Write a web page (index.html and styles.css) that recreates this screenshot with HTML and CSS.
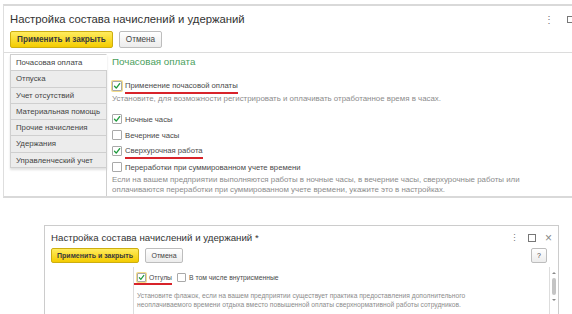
FILE: index.html
```html
<!DOCTYPE html>
<html lang="ru">
  <head>
    <meta charset="UTF-8" />
    <meta name="viewport" content="width=device-width, initial-scale=1.0" />
    <title>Настройка состава начислений и удержаний</title>
    <link rel="stylesheet" href="styles.css">
  </head>
  <body>
    <!-- Первый снимок: форма с вкладками -->
    <div class="form form-big">
      <div class="form-head">
        <h1 class="form-title">Настройка состава начислений и удержаний</h1>
        <div class="win-icons">
          <span class="icon-more">⋮</span>
          <span class="icon-max"></span>
        </div>
      </div>
      <div class="toolbar">
        <button class="btn btn-yellow">Применить и закрыть</button>
        <button class="btn">Отмена</button>
        <span class="toolbar-space"></span>
        <button class="btn btn-help"></button>
      </div>
      <div class="form-body">
        <div class="tabs">
          <div class="tab-list">
            <div class="tab tab-active">Почасовая оплата</div>
            <div class="tab">Отпуска</div>
            <div class="tab">Учет отсутствий</div>
            <div class="tab">Материальная помощь</div>
            <div class="tab">Прочие начисления</div>
            <div class="tab">Удержания</div>
            <div class="tab">Управленческий учет</div>
          </div>
          <div class="tabs-rest"></div>
        </div>
        <div class="panel">
          <div class="panel-title">Почасовая оплата</div>
          <div class="check check-first">
            <span class="box box-focus checked">
              <svg viewBox="0 0 12 12"><path d="M2.3 6.4 L4.9 9.2 L10 2.4" /></svg>
            </span>
            <span class="mark">Применение почасовой оплаты</span>
          </div>
          <p class="hint hint-first">Установите, для возможности регистрировать и оплачивать отработанное время в часах.</p>
          <div class="check-group">
            <div class="check">
              <span class="box checked">
                <svg viewBox="0 0 12 12"><path d="M2.3 6.4 L4.9 9.2 L10 2.4" /></svg>
              </span>
              <span>Ночные часы</span>
            </div>
            <div class="check">
              <span class="box"></span>
              <span>Вечерние часы</span>
            </div>
            <div class="check">
              <span class="box checked">
                <svg viewBox="0 0 12 12"><path d="M2.3 6.4 L4.9 9.2 L10 2.4" /></svg>
              </span>
              <span class="mark">Сверхурочная работа</span>
            </div>
            <div class="check">
              <span class="box"></span>
              <span>Переработки при суммированном учете времени</span>
            </div>
          </div>
          <p class="hint hint-last">Если на вашем предприятии выполняются работы в ночные часы, в вечерние часы, сверхурочные работы или<br>оплачиваются переработки при суммированном учете времени, укажите это в настройках.</p>
        </div>
      </div>
    </div>

    <!-- Второй снимок: форма с флажком "Отгулы" -->
    <div class="form form-small">
      <div class="form-head">
        <h1 class="form-title">Настройка состава начислений и удержаний *</h1>
        <div class="win-icons">
          <span class="icon-more">⋮</span>
          <span class="icon-max"></span>
          <span class="icon-close">×</span>
        </div>
      </div>
      <div class="toolbar">
        <button class="btn btn-yellow">Применить и закрыть</button>
        <button class="btn">Отмена</button>
        <span class="toolbar-space"></span>
        <button class="btn btn-help">?</button>
      </div>
      <div class="form-body">
        <div class="side-space"></div>
        <div class="panel">
          <div class="check-line">
            <span class="mark mark-wide">
              <span class="box box-focus checked">
                <svg viewBox="0 0 12 12"><path d="M2.3 6.4 L4.9 9.2 L10 2.4" /></svg>
              </span>
              <span>Отгулы</span>
            </span>
            <span class="box"></span>
            <span>В том числе внутрисменные</span>
          </div>
          <p class="hint">Установите флажок, если на вашем предприятии существует практика предоставления дополнительного<br>неоплачиваемого времени отдыха вместо повышенной оплаты сверхнормативной работы сотрудников.</p>
        </div>
        <div class="scrollbar">
          <span class="scroll-up"></span>
          <span class="scroll-thumb"></span>
          <span class="scroll-down"></span>
        </div>
      </div>
    </div>
  </body>
</html>
```

FILE: styles.css
```css
body {
  margin: 0;
  width: 572px;
  height: 314px;
  overflow: hidden;
  background-color: white;
  font-family: "Liberation Sans", Arial, sans-serif;
  color: #4a4a4a;
}

.form {
  background-color: white;
}

.form-head {
  display: flex;
  align-items: center;
}

.form-title {
  margin: 0;
  font-weight: normal;
  color: #333;
}

.win-icons {
  margin-left: auto;
  display: flex;
  align-items: center;
  color: #777;
}

.icon-max {
  display: inline-block;
  border: 1px solid #777;
}

.toolbar {
  display: flex;
  align-items: center;
}

.toolbar-space {
  flex: 1;
}

.btn {
  font-family: inherit;
  color: #444;
  background: linear-gradient(#ffffff, #ececec);
  border: 1px solid #bdbdbd;
  border-radius: 2px;
  padding: 0;
  margin: 0;
}

.btn-yellow {
  background: linear-gradient(#ffec5e, #f4cc00);
  border-color: #cdae10;
  font-weight: bold;
  color: #3a3a3a;
}

.form-body {
  display: flex;
}

.panel {
  flex: 1;
}

.check {
  display: flex;
  align-items: center;
}

.box {
  display: inline-flex;
  align-items: center;
  justify-content: center;
  box-sizing: border-box;
  background-color: white;
  border: 1px solid #a9a9a9;
  border-radius: 1px;
  flex-shrink: 0;
}

.box svg {
  width: 100%;
  height: 100%;
}

.box path {
  fill: none;
  stroke: #1f9a3c;
  stroke-width: 2;
  stroke-linecap: round;
  stroke-linejoin: round;
}

.box-focus {
  box-shadow: 0 0 0 1px #f4dc8a;
}

.mark {
  border-bottom: 2px solid #d8232a;
}

.hint {
  margin: 0;
  color: #8c8c8c;
}

/* ---------- большой снимок ---------- */

.form-big {
  width: 600px;
  margin: 4px 0 0 3px;
  border-top: 2px solid #d9d9d9;
  border-left: 1px solid #dedede;
  border-bottom: 2px solid #d9d9d9;
}

.form-big .form-head {
  padding: 5px 0 0 6px;
  height: 16px;
}

.form-big .form-title {
  font-size: 11.3px;
  line-height: 16px;
}

.form-big .win-icons {
  padding-right: 29px;
  gap: 13px;
}

.form-big .icon-more {
  font-size: 10px;
}

.form-big .icon-max {
  width: 6px;
  height: 5px;
}

.form-big .toolbar {
  margin-top: 4px;
  padding: 0 10px 0 6px;
  gap: 6px;
  height: 17px;
}

.form-big .btn {
  height: 17px;
  font-size: 8.2px;
}

.form-big .btn-yellow {
  width: 103px;
}

.form-big .btn:nth-child(2) {
  width: 43px;
}

.form-big .btn-help {
  width: 20px;
}

.form-big .form-body {
  margin-top: 4px;
  border-top: 1px solid #dcdcdc;
  padding-top: 1px;
  height: 142px;
}

.tabs {
  margin-left: 6px;
  width: 97px;
  display: flex;
  flex-direction: column;
}

.tab-list {
  box-shadow: 0 2px 2px rgba(0, 0, 0, 0.12);
}

.tab {
  box-sizing: border-box;
  height: 16.3px;
  padding-left: 5px;
  font-size: 7.8px;
  line-height: 15px;
  white-space: nowrap;
  color: #444;
  background-color: #ececec;
  border: 1px solid #cfcfcf;
  border-bottom: none;
}

.tab:last-child {
  border-bottom: 1px solid #cfcfcf;
}

.tab-active {
  background-color: white;
  border-right-color: white;
}

.tabs-rest {
  flex: 1;
  border-right: 1px solid #cfcfcf;
}

.form-big .panel {
  padding-left: 5px;
}

.panel-title {
  color: #4aa05c;
  font-size: 9.8px;
  line-height: 16px;
}

.form-big .check {
  height: 14px;
  gap: 3px;
  font-size: 7.7px;
}

.form-big .box {
  width: 10px;
  height: 10px;
}

.form-big .check .mark {
  line-height: 10px;
  padding-bottom: 1px;
  margin-top: 3px;
}

.check-first {
  margin-top: 9px;
}

.form-big .hint {
  font-size: 7.9px;
  line-height: 10px;
}

.hint-first {
  margin-top: 1px;
}

.check-group {
  margin-top: 8px;
  display: flex;
  flex-direction: column;
  gap: 2px;
}

.hint-last {
  margin-top: 1px;
}

/* ---------- малый снимок ---------- */

.form-small {
  width: 513px;
  height: 120px;
  margin: 27px 0 0 44px;
  border: 1px solid #cccccc;
}

.form-small .form-head {
  padding: 5px 0 0 6px;
  height: 14px;
}

.form-small .form-title {
  font-size: 9.7px;
  line-height: 14px;
}

.form-small .win-icons {
  padding-right: 6px;
  gap: 9px;
  font-size: 9px;
}

.form-small .icon-max {
  width: 6px;
  height: 6px;
}

.form-small .icon-close {
  font-size: 12px;
  color: #888;
}

.form-small .toolbar {
  margin-top: 3px;
  padding: 0 11px 0 6px;
  gap: 6px;
  height: 15px;
}

.form-small .btn {
  height: 15px;
  font-size: 7px;
}

.form-small .btn-yellow {
  width: 88px;
}

.form-small .btn:nth-child(2) {
  width: 38px;
}

.form-small .btn-help {
  width: 16px;
}

.form-small .form-body {
  margin-top: 4px;
  height: 60px;
}

.side-space {
  width: 88px;
  border-right: 1px solid #dddddd;
}

.form-small .panel {
  padding: 4px 0 0 3px;
}

.check-line {
  display: flex;
  align-items: center;
  gap: 3px;
  font-size: 6.8px;
  height: 13px;
}

.form-small .box {
  width: 9px;
  height: 9px;
}

.mark-wide {
  display: inline-flex;
  align-items: center;
  gap: 3px;
  margin-left: -3px;
  padding: 0 0 1px 3px;
  margin-right: 2px;
  margin-top: 3px;
}

.form-small .hint {
  margin-top: 7px;
  font-size: 6.7px;
  line-height: 9px;
}

.scrollbar {
  width: 7px;
  margin-right: 1px;
  border-left: 1px solid #dddddd;
  display: flex;
  flex-direction: column;
  align-items: center;
  padding-top: 5px;
  gap: 4px;
}

.scroll-up,
.scroll-down {
  width: 0;
  height: 0;
  border-left: 2px solid transparent;
  border-right: 2px solid transparent;
}

.scroll-up {
  border-bottom: 2px solid #888;
}

.scroll-down {
  border-top: 2px solid #888;
}

.scroll-thumb {
  width: 4px;
  height: 17px;
  border-radius: 2px;
  background-color: #c4c4c4;
}
```
